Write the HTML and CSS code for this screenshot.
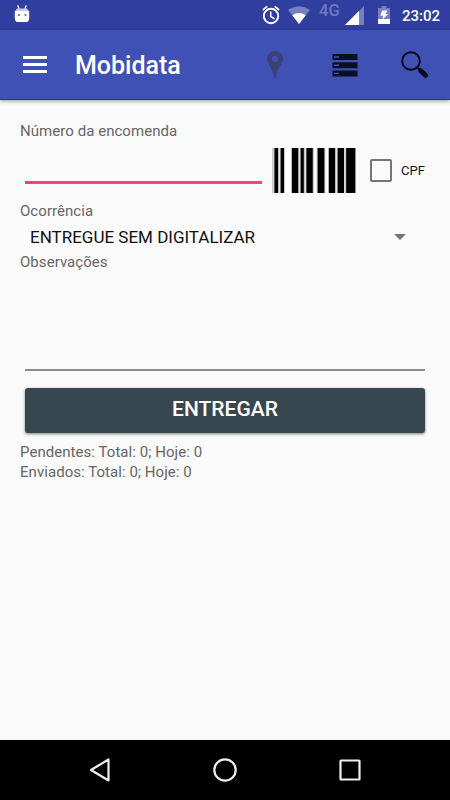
FILE: index.html
```html
<!DOCTYPE html>
<html lang="pt-BR">
<head>
  <meta charset="UTF-8">
  <title>Mobidata</title>
  <link rel="stylesheet" href="styles.css">
</head>
<body>

<div class="status-bar">
  <svg class="droid" width="16" height="18" viewBox="0 0 16 18">
    <path d="M3.800 0.300L5 4M12.200 0.300L11 4" stroke="#fff" stroke-width="1.200"/>
    <path d="M3 3.500h10l2 3H1z" fill="#c5cae9"/>
    <path d="M.8 6h14.400v7q0 4-3 4H3.800q-3 0-3-4z" fill="#fff"/>
    <path d="M4 9h2v2H4zM10.500 9h2v2h-2z" fill="#7d86c5"/>
  </svg>
  <svg class="alarm" width="18" height="20" viewBox="0 0 18 20" fill="none" stroke="#fff">
    <circle cx="9" cy="11" r="7.200" stroke-width="1.900"/>
    <path d="M0.900 5L5.200 1.400M17.100 5L12.800 1.400" stroke-width="1.800"/>
    <path d="M8.700 6.500v5l3.800 2.300" stroke-width="1.500"/>
  </svg>
  <svg class="wifi" width="22" height="18" viewBox="0 0 22 18">
    <path d="M0 3.800Q11-3.500 22 3.800L11 18z" fill="#7580c1"/>
    <path d="M4.200 9.200Q11 4.800 17.800 9.200L11 18z" fill="#fff"/>
  </svg>
  <span class="network">4G</span>
  <svg class="signal" width="19" height="19" viewBox="0 0 19 19">
    <path d="M0 19L19 0v19z" fill="#7580c1"/>
    <path d="M0 19L14 5v14z" fill="#fff"/>
  </svg>
  <svg class="battery" width="12" height="18" viewBox="0 0 12 18">
    <path d="M0 2h3.500V0h5v2H12v11H0z" fill="#7580c1"/>
    <path d="M0 13h12v5H0z" fill="#fff"/>
    <path d="M4 4.500h5.500L7.500 8H10l-5.500 5.500L5.200 9.800H2.500z" fill="#fff"/>
  </svg>
  <span class="clock">23:02</span>
</div>

<div class="toolbar">
  <div class="menu">
    <span></span>
    <span></span>
    <span></span>
  </div>
  <h1>Mobidata</h1>
  <svg class="pin" width="16" height="28" viewBox="0 0 16 28">
    <path fill-rule="evenodd" d="M8 0a8 8 0 0 1 8 8c0 5-6 8.500-7.500 20h-1C6 16.500 0 13 0 8a8 8 0 0 1 8-8zM8 4.800a3.200 3.200 0 1 0 0 6.400a3.200 3.200 0 1 0 0-6.400z" fill="#3a4173"/>
  </svg>
  <svg class="list" width="26" height="24" viewBox="0 0 26 24">
    <path d="M.5 1h25v6H.5zM.5 9.200h25v6H.5zM.5 17.400h25v6H.5z" fill="#090e20"/>
    <path d="M2 4h5M2 12.200h5M2 20.400h5" stroke="#4353b4" stroke-width="1.400"/>
  </svg>
  <svg class="search" width="28" height="28" viewBox="0 0 28 28">
    <circle cx="10" cy="10" r="8.800" fill="none" stroke="#050816" stroke-width="1.900"/>
    <path d="M16 16.200l3 2.800" stroke="#050816" stroke-width="2"/>
    <path d="M19.700 19.700l5 4.700" stroke="#050816" stroke-width="4.800" stroke-linecap="round"/>
  </svg>
</div>

<div class="content">
  <label>Número da encomenda</label>
  <div class="order-row">
    <div class="order-input"></div>
    <svg class="barcode" width="84" height="45" viewBox="0 0 84 45">
      <rect width="84" height="45" fill="#fff"/>
      <path d="M.3 0h.9v45H.3zM1.600 0h11.200v45H1.600zM19 0h22.800v45H19zM44.700 0h8.600v45h-8.600zM56 0h28v45H56z" fill="#b5b5b5"/>
      <path d="M6.900 0h1v45h-1zM26.900 0h1v45h-1zM32.700 0h1v45h-1zM63.900 0h1v45h-1zM72.400 0h1v45h-1z" fill="#eee"/>
      <path d="M2.500 0H6v45H2.500zM8.700 0H12v45H8.700zM20 0h6.200v45H20zM28.700 0h3.100v45h-3.100zM34.500 0h6.200v45h-6.200zM45.700 0h6.600v45h-6.600zM57 0h6v45h-6zM65.700 0H72v45h-6.300zM74.200 0h9v45h-9z" fill="#000"/>
    </svg>
    <div class="checkbox"></div>
    <span class="cpf">CPF</span>
  </div>

  <label>Ocorrência</label>
  <div class="spinner">
    <span>ENTREGUE SEM DIGITALIZAR</span>
    <svg width="12" height="6" viewBox="0 0 12 6"><path d="M0 0h12L6 6z" fill="#757575"/></svg>
  </div>

  <label>Observações</label>
  <div class="notes"></div>

  <button class="send">ENTREGAR</button>

  <p>Pendentes: Total: 0; Hoje: 0</p>
  <p>Enviados: Total: 0; Hoje: 0</p>
</div>

<div class="nav-bar">
  <svg width="26" height="26" viewBox="0 0 26 26"><path d="M21.500 2.500v21L4 13z"/></svg>
  <svg width="26" height="26" viewBox="0 0 26 26"><circle cx="13" cy="13" r="10.700"/></svg>
  <svg width="26" height="26" viewBox="0 0 26 26"><rect x="3.500" y="3.500" width="19" height="19" rx=".5"/></svg>
</div>

</body>
</html>
```

FILE: styles.css
```css
* {
  box-sizing: border-box;
}

body {
  margin: 0;
  font-family: Roboto, "Liberation Sans", sans-serif;
  background-color: #fafafa;
  display: flex;
  flex-direction: column;
  height: 100vh;
  overflow: hidden;
}

svg {
  display: block;
  flex-shrink: 0;
}

.status-bar {
  height: 30px;
  background-color: #303f9f;
  color: white;
  display: flex;
  align-items: flex-start;
  padding: 0 10px 0 14px;
  flex-shrink: 0;
}

.droid {
  margin-top: 5px;
}

.alarm {
  margin: 5px 0 0 auto;
}

.wifi {
  margin: 6px 0 0 8px;
}

.network {
  margin: 1px 0 0 9px;
  width: 22px;
  font-size: 16.5px;
  font-weight: 500;
  line-height: 20px;
  color: #7079bd;
}

.signal {
  margin: 6px 0 0 4px;
}

.battery {
  margin: 6px 0 0 14px;
}

.clock {
  margin-left: 12px;
  width: 38px;
  font-size: 15px;
  font-weight: 500;
  line-height: 32px;
  white-space: nowrap;
}

.toolbar {
  height: 70px;
  background-color: #3f51b5;
  border-bottom: 1px solid #1c35a0;
  box-shadow: 0 1px 4px rgba(0, 0, 0, 0.4);
  display: flex;
  align-items: flex-start;
  padding: 0 21px 0 23px;
  flex-shrink: 0;
}

.menu {
  margin-top: 26px;
  width: 24px;
  display: flex;
  flex-direction: column;
  gap: 4px;
}

.menu span {
  height: 3px;
  background-color: white;
}

.toolbar h1 {
  margin: 0 auto 0 28px;
  color: white;
  font-size: 25px;
  font-weight: 500;
  line-height: 72px;
}

.pin {
  margin: 21px 49px 0 0;
}

.list {
  margin: 23px 43px 0 0;
}

.search {
  margin-top: 21px;
}

.content {
  flex: 1;
  padding: 21px 20px 0;
  color: #666;
  font-size: 15px;
  line-height: 20px;
  letter-spacing: 0.05px;
}

label {
  display: block;
}

.order-row {
  display: flex;
  align-items: flex-start;
  height: 60px;
  padding: 7px 0 0 5px;
}

.order-input {
  width: 237px;
  height: 36px;
  border-bottom: 3px solid #f5427f;
}

.barcode {
  margin-left: 10px;
}

.checkbox {
  margin: 11px 0 0 14px;
  width: 22px;
  height: 23px;
  border: 2px solid #757575;
  border-radius: 2px;
}

.cpf {
  margin: 13px 0 0 9px;
  color: #111;
  font-size: 13px;
  letter-spacing: 0;
}

.spinner {
  display: flex;
  align-items: center;
  justify-content: space-between;
  height: 31px;
  padding: 0 24px 0 10px;
  color: #111;
  font-size: 17px;
  letter-spacing: 0;
}

.notes {
  height: 99px;
  margin: 0 5px;
  border-bottom: 2px solid #8a8a8a;
}

.send {
  display: block;
  width: 400px;
  height: 45px;
  margin: 17px 5px 9px;
  padding: 0 0 4px;
  border: none;
  border-radius: 3px;
  background-color: #37474f;
  box-shadow: 0 1px 3px rgba(0, 0, 0, 0.5);
  color: white;
  font-family: inherit;
  font-size: 21px;
  font-weight: 500;
}

.content p {
  margin: 0;
}

.nav-bar {
  height: 60px;
  background-color: black;
  display: flex;
  align-items: center;
  justify-content: center;
  gap: 99px;
  flex-shrink: 0;
}

.nav-bar svg {
  fill: none;
  stroke: #eee;
  stroke-width: 2.2;
  stroke-linejoin: round;
}
```
